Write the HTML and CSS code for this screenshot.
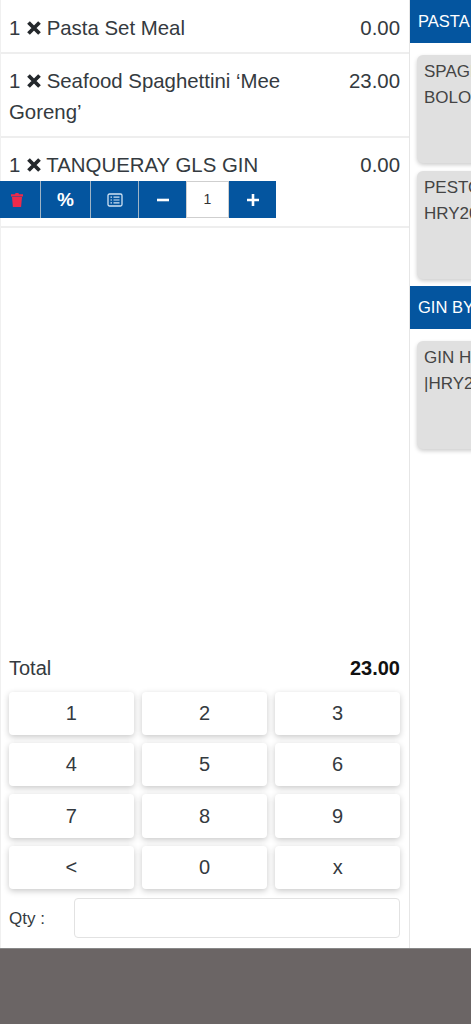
FILE: index.html
```html
<!DOCTYPE html>
<html lang="en">
<head>
<meta charset="utf-8">
<title>POS Order</title>
<link rel="stylesheet" href="styles.css">
</head>
<body>
<div class="app">
  <main class="order">
    <section class="lines">
      <div class="line line-one">
        <div class="line-text"><span>1</span> <svg class="times" viewBox="0 0 16 16"><path d="M2.5 2.5 13.5 13.5M13.5 2.5 2.5 13.5"/></svg> Pasta Set Meal</div>
        <div class="price">0.00</div>
      </div>
      <div class="line line-two">
        <div class="line-text"><span>1</span> <svg class="times" viewBox="0 0 16 16"><path d="M2.5 2.5 13.5 13.5M13.5 2.5 2.5 13.5"/></svg> Seafood Spaghettini ‘Mee Goreng’</div>
        <div class="price">23.00</div>
      </div>
      <div class="line line-three">
        <div class="line-main">
          <div class="line-text"><span>1</span> <svg class="times" viewBox="0 0 16 16"><path d="M2.5 2.5 13.5 13.5M13.5 2.5 2.5 13.5"/></svg> TANQUERAY GLS GIN</div>
          <div class="price">0.00</div>
        </div>
        <div class="tools">
          <button class="tool tool-trash"><svg viewBox="0 0 14 16" class="ic-trash"><path d="M1 2.2h4l.6-1.2h2.8l.6 1.2h4v2.3H1zM2 5h10l-.9 10H2.9z"/></svg></button>
          <button class="tool tool-pct">%</button>
          <button class="tool tool-note"><svg viewBox="0 0 16 14" class="ic-note"><rect x="1" y="1" width="14" height="12" rx="1.5"/><path d="M3.5 4.2h1.5M6.5 4.2h6M3.5 7h1.5M6.5 7h6M3.5 9.8h1.5M6.5 9.8h6"/></svg></button>
          <button class="tool tool-minus"><svg viewBox="0 0 14 14" class="ic-sign"><path d="M1 7h12"/></svg></button>
          <div class="tool-qty">1</div>
          <button class="tool tool-plus"><svg viewBox="0 0 14 14" class="ic-sign"><path d="M1 7h12M7 1v12"/></svg></button>
        </div>
      </div>
    </section>
    <section class="summary">
      <div class="total"><span>Total</span><strong>23.00</strong></div>
      <div class="pad">
        <button class="key">1</button><button class="key">2</button><button class="key">3</button>
        <button class="key">4</button><button class="key">5</button><button class="key">6</button>
        <button class="key">7</button><button class="key">8</button><button class="key">9</button>
        <button class="key">&lt;</button><button class="key">0</button><button class="key">x</button>
      </div>
      <div class="qty"><label for="q">Qty :</label><input id="q" type="text"></div>
    </section>
  </main>
  <aside class="menu">
    <h2 class="cat">PASTA SET MEAL</h2>
    <div class="cards">
      <div class="card">SPAGHETTI<br>BOLOGNESE</div>
      <div class="card">PESTO<br>HRY2022</div>
    </div>
    <h2 class="cat cat-gin">GIN BY GLASS</h2>
    <div class="cards">
      <div class="card">GIN HOUSE<br>|HRY2022</div>
    </div>
  </aside>
</div>
<footer class="bar"></footer>
</body>
</html>
```
FILE: styles.css
```css
* { box-sizing: border-box; }
html, body { margin: 0; height: 100%; }
body {
  width: 471px;
  height: 1024px;
  overflow: hidden;
  background: #fff;
  font-family: "Liberation Sans", Arial, sans-serif;
  color: #343a40;
  display: flex;
  flex-direction: column;
}
.app { display: flex; height: 948px; flex: none; }
.order {
  width: 410px;
  flex: none;
  border-right: 1px solid #e6e6e6;
  border-left: 1px solid #f0f0f0;
  display: flex;
  flex-direction: column;
  justify-content: space-between;
}
.line { border-bottom: 2px solid #eeeeee; font-size: 20.4px; line-height: 31px; }
.line-one, .line-two { display: flex; justify-content: space-between; align-items: flex-start; padding: 13px 9px 8px 8px; }
.line-one { height: 54px; }
.line-two { height: 84px; padding-top: 12px; }
.line-three { height: 90px; padding-top: 12px; }
.line-main { display: flex; justify-content: space-between; padding: 0 9px 0 8px; height: 31px; }
.line-text { flex: 1; min-width: 0; padding-right: 40px; }
.price { flex: none; text-align: right; }
.times { width: 16px; height: 16px; margin: 0 -1px 0 0; vertical-align: -1px; }
.times path { fill: none; stroke: #24282c; stroke-width: 3.8; }
.tools { display: flex; height: 37px; margin-left: -1px; margin-top: 0; width: 276px; }
.tool {
  border: 0;
  padding: 0;
  margin: 0;
  background: #04559f;
  color: #fff;
  border-right: 1px solid #9fb4c6;
  display: flex;
  align-items: center;
  justify-content: center;
  font-family: inherit;
}
.tool-trash { width: 41px; padding-right: 7px; }
.tool-pct { width: 50px; font-size: 19px; font-weight: 700; }
.tool-note { width: 48px; }
.tool-minus { width: 47px; border-right: 0; }
.tool-plus { width: 47px; border-right: 0; }
.tool-qty {
  width: 43px;
  background: #fff;
  border: 1px solid #cfcfcf;
  color: #333;
  font-size: 14px;
  display: flex;
  align-items: center;
  justify-content: center;
}
.ic-trash { width: 14px; height: 16px; fill: #ee2a4a; }
.ic-note { width: 16px; height: 14px; fill: none; stroke: #cfe2f3; stroke-width: 1.3; }
.ic-note path { stroke: #cfe2f3; stroke-width: 1.2; fill: none; }
.ic-sign { width: 14px; height: 14px; }
.ic-sign path { stroke: #fff; stroke-width: 2.6; fill: none; }
.summary { padding: 0 9px 10px 8px; }
.total { display: flex; justify-content: space-between; font-size: 20px; line-height: 22px; margin-bottom: 13px; }
.total strong { color: #111; }
.pad {
  display: grid;
  grid-template-columns: repeat(3, 1fr);
  column-gap: 8.5px;
  row-gap: 8px;
}
.key {
  height: 43.33px;
  background: #fff;
  border: 0;
  border-radius: 4px;
  font-family: inherit;
  font-size: 20px;
  color: #343a40;
  box-shadow: 0 2px 6px rgba(0, 0, 0, .22);
}
.qty { display: flex; align-items: center; justify-content: space-between; margin-top: 9px; font-size: 17px; }
.qty label { padding-top: 2px; }
.qty input { width: 326px; height: 40px; border: 1px solid #e2e2e2; border-radius: 4px; background: #fff; }
.menu { flex: 1; min-width: 0; overflow: hidden; }
.cat {
  margin: 0;
  height: 43px;
  background: #04559f;
  color: #fff;
  font-size: 16.5px;
  font-weight: 400;
  line-height: 43px;
  padding-left: 8px;
  white-space: nowrap;
}
.cat-gin { margin-top: 0; }
.cards { padding: 12px 0 7px 7px; display: flex; flex-direction: column; gap: 8px; }
.card {
  width: 120px;
  height: 108px;
  background: #e0e0e0;
  border-radius: 6px;
  padding: 4px 7px;
  font-size: 17px;
  line-height: 26px;
  color: #444;
  white-space: nowrap;
  box-shadow: 0 2px 4px rgba(0, 0, 0, .2);
}
.bar { flex: 1; background: #6b6565; border-top: 1px solid #888; }
```
